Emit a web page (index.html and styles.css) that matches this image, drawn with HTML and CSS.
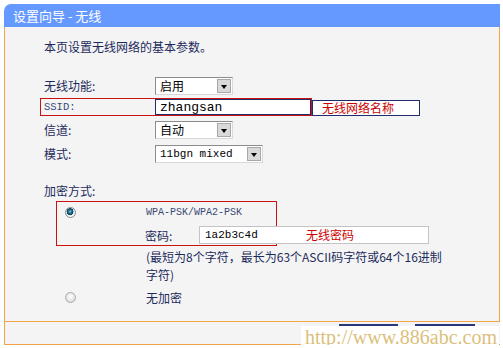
FILE: index.html
```html
<!DOCTYPE html>
<html lang="zh-CN">
<head>
    <meta charset="UTF-8">
    <meta name="viewport" content="width=device-width, initial-scale=1.0">
    <title>设置向导 - 无线</title>
    <link rel="stylesheet" href="styles.css">
</head>
<body>
    <div class="wizard">
        <div class="wizard-head">设置向导 - 无线</div>

        <div class="wizard-body">
            <p class="intro">本页设置无线网络的基本参数。</p>

            <div class="row row-first">
                <span class="label">无线功能:</span>
                <span class="select sel-short"><span class="sel-text">启用</span><span class="sel-btn"></span></span>
            </div>

            <div class="row row-ssid">
                <div class="ssid-box">
                    <span class="label mono">SSID:</span>
                    <span class="input input-dark mono-big">zhangsan</span>
                </div>
                <span class="note note-box">无线网络名称</span>
            </div>

            <div class="row row-channel">
                <span class="label">信道:</span>
                <span class="select sel-short"><span class="sel-text">自动</span><span class="sel-btn"></span></span>
            </div>

            <div class="row row-mode">
                <span class="label">模式:</span>
                <span class="select sel-long"><span class="sel-text mono">11bgn mixed</span><span class="sel-btn"></span></span>
            </div>

            <p class="enc-title">加密方式:</p>

            <div class="wpa-box">
                <div class="opt-line">
                    <span class="radio radio-on"></span>
                    <span class="wpa-name mono-small">WPA-PSK/WPA2-PSK</span>
                </div>
                <div class="pwd-line">
                    <span class="pwd-label">密码:</span>
                    <span class="input input-light">
                        <span class="pwd-value mono">1a2b3c4d</span>
                        <span class="note">无线密码</span>
                    </span>
                </div>
            </div>

            <p class="hint">(最短为8个字符，最长为63个ASCII码字符或64个16进制字符)</p>

            <div class="opt-line opt-none">
                <span class="radio"></span>
                <span class="none-label">无加密</span>
            </div>
        </div>

        <div class="wizard-foot">
            <span class="btn-edge btn-prev"></span>
            <span class="btn-edge btn-next"></span>
            <span class="watermark">http://www.886abc.com</span>
        </div>
    </div>
</body>
</html>
```

FILE: styles.css
```css
body {
    margin: 0;
    background-color: #ffffff;
    font-family: "Noto Sans CJK SC", "DejaVu Sans", sans-serif;
    font-size: 12px;
    color: #1d2b5c;
}
p {
    margin: 0;
}
.mono {
    font-family: "Liberation Mono", "DejaVu Sans Mono", monospace;
    font-size: 11px;
}
.mono-big {
    font-family: "Liberation Mono", "DejaVu Sans Mono", monospace;
    font-size: 13px;
}
.mono-small {
    font-family: "Liberation Mono", "DejaVu Sans Mono", monospace;
    font-size: 10px;
}
.wizard {
    position: relative;
    width: 496px;
    margin: 4px 0 0 4px;
}
.wizard-head {
    height: 23px;
    line-height: 23px;
    padding-left: 9px;
    background-color: #6699ff;
    border-radius: 7px 0 0 0;
    color: #ffffff;
    font-size: 13px;
}
.wizard-body {
    height: 294px;
    padding-left: 39px;
    background-color: #f4f4f4;
    border-left: 1px solid #f3a448;
    border-right: 1px solid #f3a448;
    border-bottom: 1px solid #f3a448;
}
.intro {
    padding-top: 11px;
    line-height: 18px;
}
.row {
    display: flex;
    align-items: center;
    height: 18px;
}
.row-first { margin-top: 21px; }
.row-ssid { margin-top: 3px; align-items: flex-start; }
.row-channel { margin-top: 5px; }
.row-mode { margin-top: 6px; }
.label {
    width: 111px;
    flex-shrink: 0;
    line-height: 18px;
}
.label.mono {
    font-size: 10.5px;
    color: #3a4a74;
}

/* listas desplegables estilo Windows clásico */
.select {
    display: flex;
    align-items: center;
    height: 18px;
    box-sizing: border-box;
    background-color: #ffffff;
    border: 1px solid #8c8c8c;
    border-right-color: #d8d8d8;
    border-bottom-color: #d8d8d8;
}
.sel-short { width: 78px; }
.sel-long { width: 108px; }
.sel-text {
    flex: 1;
    padding-left: 4px;
    line-height: 16px;
    color: #000000;
}
.sel-btn {
    position: relative;
    width: 14px;
    height: 14px;
    margin-right: 1px;
    background-color: #d9d9d9;
    border: 1px solid #a8a8a8;
    box-sizing: border-box;
}
.sel-btn::after {
    content: "";
    position: absolute;
    left: 3px;
    top: 5px;
    border-left: 3.5px solid transparent;
    border-right: 3.5px solid transparent;
    border-top: 4px solid #000000;
}

.input {
    display: flex;
    align-items: center;
    box-sizing: border-box;
    background-color: #ffffff;
    color: #000000;
}
.input-dark {
    width: 156px;
    height: 16px;
    padding-left: 4px;
    border: 1px solid #1f2d6e;
}
.input-light {
    flex-shrink: 0;
    width: 230px;
    height: 18px;
    padding-left: 5px;
    border: 1px solid #c4c4c4;
}

/* anotaciones en rojo */
.ssid-box {
    display: flex;
    align-items: center;
    width: 272px;
    height: 18px;
    box-sizing: border-box;
    margin-left: -4px;
    padding-left: 3px;
    border: 1px solid #cc1111;
}
.note {
    color: #cc0000;
    line-height: 16px;
}
.note-box {
    width: 108px;
    height: 16px;
    margin-top: 2px;
    padding-left: 9px;
    box-sizing: border-box;
    border: 1px solid #1f2d6e;
    background-color: #ffffff;
    line-height: 14px;
}
.enc-title {
    margin-top: 19px;
    line-height: 18px;
}
.wpa-box {
    width: 221px;
    height: 45px;
    box-sizing: border-box;
    margin: 1px 0 0 12px;
    padding-top: 1px;
    border: 1px solid #cc1111;
}
.opt-line {
    display: flex;
    align-items: center;
    height: 18px;
}
.opt-line .radio {
    margin-left: 8px;
    margin-right: 70px;
}
.wpa-name {
    color: #3a4a74;
}
.pwd-line {
    display: flex;
    align-items: center;
    height: 18px;
    margin: 5px 0 0 88px;
}
.pwd-label {
    width: 54px;
    flex-shrink: 0;
}
.pwd-value {
    width: 101px;
}
.radio {
    width: 11px;
    height: 11px;
    flex-shrink: 0;
    box-sizing: border-box;
    border-radius: 50%;
    border: 1px solid #a9a9a9;
    background: radial-gradient(circle at 50% 40%, #ffffff 0, #e4e4e4 60%, #c8c8c8 100%);
}
.radio-on {
    border-color: #7d8a92;
    background: radial-gradient(circle at 45% 40%, #8fd0e0 0, #1f7591 1.6px, #0e3d52 3.2px, #d6dfe4 3.6px, #ffffff 5px);
}
.hint {
    width: 300px;
    margin: 2px 0 0 102px;
    line-height: 18px;
}
.opt-none {
    margin-top: 4px;
}
.opt-none .radio {
    margin-left: 21px;
}
.wizard-foot {
    position: relative;
    height: 22px;
    background-color: #f4f4f4;
    border-left: 1px solid #f3a448;
    border-bottom: 1px solid #f3a448;
}
.btn-edge {
    position: absolute;
    top: 2px;
    height: 0;
    border-top: 2px solid #28387e;
}
.btn-prev { left: 334px; width: 59px; }
.btn-next { left: 410px; width: 60px; }

/* marca de agua sobre el pie */
.watermark {
    position: absolute;
    right: 1px;
    top: 4px;
    height: 22px;
    padding: 0 2px 0 4px;
    background-color: #ffffff;
    font-family: "Liberation Serif", serif;
    font-size: 20px;
    line-height: 22px;
    color: #dcbf7c;
}
```
